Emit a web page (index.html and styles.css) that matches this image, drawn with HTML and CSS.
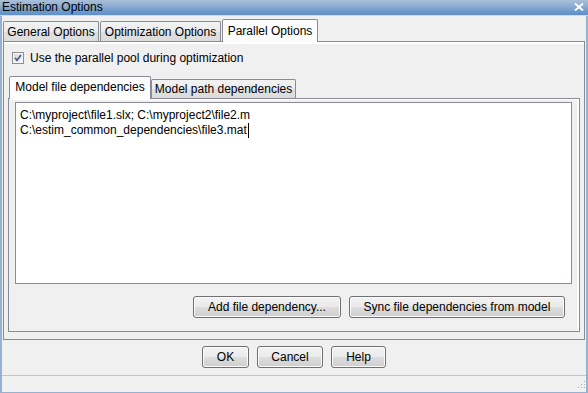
FILE: index.html
```html
<!DOCTYPE html>
<html>
<head>
<meta charset="utf-8">
<link rel="stylesheet" href="styles.css">
</head>
<body>
<div class="titlebar">
  <span class="title">Estimation Options</span>
  <svg class="close" width="10" height="8" viewBox="0 0 10 8"><path d="M1 0.5 L9 7.5 M9 0.5 L1 7.5" stroke="#fff" stroke-width="1.9" fill="none"/></svg>
</div>
<div class="frame">
  <div class="tabs">
    <div class="tab tab-general">General Options</div>
    <div class="tab tab-opt">Optimization Options</div>
    <div class="tab tab-par active">Parallel Options</div>
  </div>
  <div class="panel">
    <div class="check-row">
      <svg class="checkbox" width="12" height="12" viewBox="0 0 12 12">
        <defs><linearGradient id="cbg" x1="0" y1="0" x2="1" y2="1"><stop offset="0" stop-color="#d9dadb"/><stop offset="1" stop-color="#f7f7f7"/></linearGradient></defs>
        <rect x="0.5" y="0.5" width="11" height="11" fill="#f6f6f6" stroke="#8e8f8f"/>
        <rect x="2" y="2" width="8" height="8" fill="url(#cbg)"/>
        <path d="M3 5.8 L5 8.3 L9 3" stroke="#4c5e8e" stroke-width="1.8" fill="none"/>
      </svg>
      <span class="check-label">Use the parallel pool during optimization</span>
    </div>
    <div class="subtabs">
      <div class="subtab sub-file active">Model file dependencies</div>
      <div class="subtab sub-path">Model path dependencies</div>
    </div>
    <div class="subpanel">
      <div class="textarea">
        <div class="line">C:\myproject\file1.slx; C:\myproject2\file2.m</div>
        <div class="line">C:\estim_common_dependencies\file3.mat<span class="caret"></span></div>
      </div>
      <div class="btn-row">
        <button class="btn btn-add">Add file dependency...</button>
        <button class="btn btn-sync">Sync file dependencies from model</button>
      </div>
    </div>
  </div>
  <div class="footer">
    <button class="btn btn-ok">OK</button>
    <button class="btn btn-cancel">Cancel</button>
    <button class="btn btn-help">Help</button>
  </div>
  <div class="statusbar">
    <svg class="grip" width="10" height="10" viewBox="0 0 10 10">
      <g fill="#fff">
        <rect x="9" y="1" width="1" height="1"/>
        <rect x="6" y="4" width="1" height="1"/><rect x="9" y="4" width="1" height="1"/>
        <rect x="3" y="7" width="1" height="1"/><rect x="6" y="7" width="1" height="1"/><rect x="9" y="7" width="1" height="1"/>
      </g>
      <g fill="#a9aeb5">
        <rect x="8" y="0" width="1" height="1"/>
        <rect x="5" y="3" width="1" height="1"/><rect x="8" y="3" width="1" height="1"/>
        <rect x="2" y="6" width="1" height="1"/><rect x="5" y="6" width="1" height="1"/><rect x="8" y="6" width="1" height="1"/>
      </g>
    </svg>
  </div>
</div>
</body>
</html>
```

FILE: styles.css
```css
* { box-sizing: border-box; }

html, body {
  margin: 0;
  padding: 0;
}

body {
  width: 588px;
  height: 393px;
  overflow: hidden;
  background: #f0f0f0;
  font-family: "Liberation Sans", Arial, sans-serif;
  font-size: 12px;
  color: #000;
}

.titlebar {
  height: 16px;
  display: flex;
  align-items: center;
  justify-content: space-between;
  padding: 0 4px 1px 2px;
  line-height: 15px;
  background: linear-gradient(#a9bfda 0%, #93afd3 35%, #6e9acc 75%, #5f8ec9 100%);
  border-bottom: 1px solid #d6dbe2;
  color: #000;
}

.close { display: block; }

.frame {
  height: 377px;
  border-left: 2px solid #97b2d1;
  border-right: 2px solid #97b2d1;
  border-bottom: 1px solid #97b2d1;
  display: flex;
  flex-direction: column;
}

/* top tabs */
.tabs {
  height: 25px;
  flex: none;
  display: flex;
  align-items: flex-end;
  padding-left: 1px;
}

.tab {
  height: 20px;
  padding-top: 2px;
  line-height: 17px;
  text-align: center;
  white-space: nowrap;
  border: 1px solid #898c95;
  border-bottom: none;
  border-radius: 2px 2px 0 0;
  background: linear-gradient(#f3f3f3 0%, #ebebeb 50%, #e0e0e0 51%, #dcdcdc 100%);
}

.tab-general { width: 96px; margin-right: 1px; }
.tab-opt { width: 121px; margin-right: 1px; }
.tab-par { width: 96px; }

.tab.active {
  height: 23px;
  padding-top: 3px;
  margin-bottom: -1px;
  background: #fcfcfc;
  position: relative;
  z-index: 1;
}

.panel {
  height: 299px;
  flex: none;
  margin: 0 1px;
  border: 1px solid #898c95;
  box-shadow: inset 0 2px 0 #fff;
  display: flex;
  flex-direction: column;
  padding: 9px 0 0 0;
}

.check-row {
  height: 14px;
  display: flex;
  align-items: center;
  padding-left: 8px;
  line-height: 14px;
}

.checkbox { display: block; margin-right: 6px; }

/* sub tabs */
.subtabs {
  height: 22px;
  margin-top: 11px;
  display: flex;
  align-items: flex-end;
  padding-left: 5px;
}

.subtab {
  height: 19px;
  padding-top: 1px;
  line-height: 17px;
  text-align: center;
  white-space: nowrap;
  border: 1px solid #898c95;
  border-bottom: none;
  border-radius: 2px 2px 0 0;
  background: linear-gradient(#f3f3f3 0%, #ebebeb 50%, #e0e0e0 51%, #dcdcdc 100%);
}

.sub-file { width: 142px; }
.sub-path { width: 145px; }

.subtab.active {
  height: 23px;
  padding-top: 2px;
  margin-bottom: -1px;
  background: #fcfcfc;
  position: relative;
  z-index: 1;
}

.subpanel {
  height: 234px;
  margin: 0 4px 0 4px;
  border: 1px solid #898c95;
  box-shadow: inset 0 1px 0 #fff, inset -2px 0 0 #fff;
  padding: 3px 7px 0 6px;
  display: flex;
  flex-direction: column;
}

.textarea {
  height: 182px;
  flex: none;
  background: #fff;
  border: 1px solid #898c95;
  padding: 5px 4px 0 4px;
  line-height: 15px;
  white-space: nowrap;
}

.caret {
  display: inline-block;
  width: 1px;
  height: 15px;
  background: #000;
  vertical-align: top;
  margin-left: 1px;
}

.btn-row {
  display: flex;
  justify-content: flex-end;
  gap: 8px;
  margin-top: 12px;
  padding-right: 7px;
}

.btn {
  height: 22px;
  padding: 0;
  margin: 0;
  font-family: inherit;
  font-size: 12px;
  line-height: 20px;
  color: #000;
  text-align: center;
  border: 1px solid #707070;
  border-radius: 3px;
  background: linear-gradient(#f2f2f2 0%, #ebebeb 48%, #dddddd 52%, #cfcfcf 100%);
  box-shadow: inset 0 0 0 1px #fbfbfb;
}

.btn-add { width: 148px; }
.btn-sync { width: 216px; }
.btn-ok { width: 47px; }
.btn-cancel { width: 66px; }
.btn-help { width: 55px; }

.footer {
  height: 36px;
  padding-top: 6px;
  display: flex;
  justify-content: center;
  align-items: flex-start;
  gap: 8px;
  border-bottom: 1px solid #b7c6d8;
  flex: none;
}

.statusbar {
  height: 16px;
  flex: none;
  display: flex;
  justify-content: flex-end;
  align-items: flex-end;
  padding-bottom: 1px;
}

.grip { display: block; }
```
